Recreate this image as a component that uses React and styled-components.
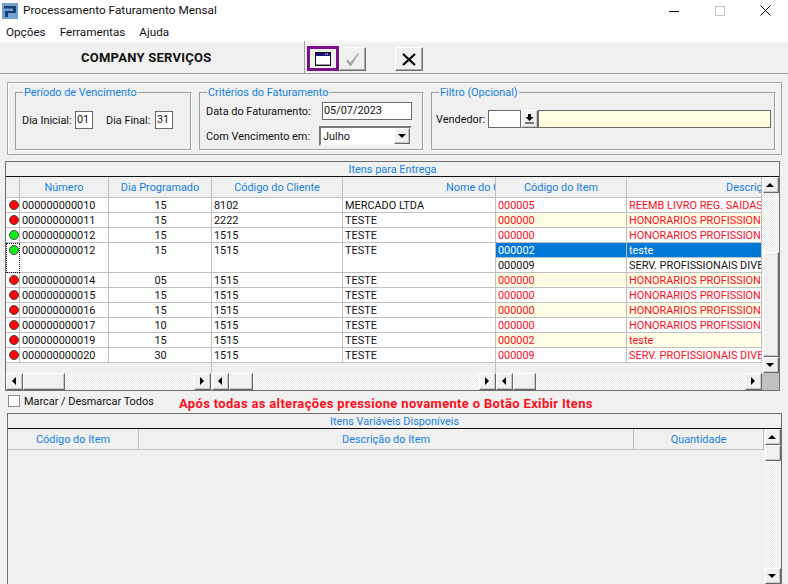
import styled, { createGlobalStyle } from "styled-components"

const FONT = `Roboto, "Noto Sans", "Liberation Sans", sans-serif`
const LINE = "#c0c0c0"
const BLUE = "#1580e6"
const RED = "#ff0d1d"

const Global = createGlobalStyle`
  html, body { margin: 0; padding: 0; background: #f0f0f0; }
  body { font-family: ${FONT}; font-size: 10.9px; color: #111; }
  * { box-sizing: border-box; }
`

const Page = styled.div`
  width: 788px;
  height: 584px;
  overflow: hidden;
  background: #f0f0f0;
`

const TitleBar = styled.div`
  height: 21px;
  background: #fff;
  display: flex;
  align-items: center;
  padding-left: 2px;
  font-size: 11.8px;
`

const TitleText = styled.span`
  margin: 0 0 1px 5px;
  flex: 1;
`

const WinButton = styled.div`
  width: 46px;
  height: 21px;
  display: flex;
  align-items: center;
  justify-content: center;
  &:last-child { width: 45px; }
`

const MenuBar = styled.div`
  height: 20px;
  background: #fff;
  display: flex;
  align-items: center;
  gap: 14px;
  padding: 2px 0 0 6px;
  font-size: 11.7px;
`

const Toolbar = styled.div`
  height: 33px;
  border-bottom: 1px solid #a0a0a0;
  display: flex;
  box-shadow: inset 0 2px 0 #f6f6f6;
`

const Company = styled.div`
  width: 305px;
  padding: 9px 0 0 81px;
  font-size: 13px;
  font-weight: 700;
  letter-spacing: 0.25px;
  border-right: 1px solid #a0a0a0;
  white-space: nowrap;
`

const ToolGroup = styled.div`
  display: flex;
  align-items: flex-start;
  padding: 5px 0 0 2px;
`

const ToolButton = styled.div`
  height: ${p => (p.$active ? 25 : 24)}px;
  width: ${p => p.$w}px;
  margin-left: ${p => p.$gap || 0}px;
  margin-top: ${p => (p.$active ? 0 : 1)}px;
  display: flex;
  align-items: center;
  justify-content: center;
  border: ${p => (p.$active ? "3px solid #7b0f8c" : "1px solid")};
  border-color: ${p => (p.$active ? "#7b0f8c" : "#fff #6e6e6e #6e6e6e #fff")};
  box-shadow: ${p => (p.$active ? "none" : "inset -1px -1px 0 #a8a8a8")};
  background: #f0f0f0;
`

const FilterPanel = styled.div`
  margin: 8px 6px 0 7px;
  height: 73px;
  border: 1px solid #a8a8a8;
  box-shadow: inset 1px 1px 0 #fff;
  display: flex;
  gap: 8px;
  padding: 1px 0 0 7px;
`

const Group = styled.fieldset`
  width: ${p => p.$w}px;
  height: 66px;
  margin: 0;
  padding: 0;
  border: 1px solid #a0a0a0;
  box-shadow: 1px 1px 0 #fff;
  display: block;
`

const Legend = styled.legend`
  margin-left: 7px;
  padding: 2px 1px 0;
  color: ${BLUE};
  line-height: 14px;
  white-space: nowrap;
`

const FieldRow = styled.div`
  display: flex;
  align-items: center;
  height: 20px;
  padding-left: ${p => p.$left}px;
  margin-top: ${p => p.$top || 0}px;
`

const Label = styled.span`
  width: ${p => p.$w}px;
  margin-left: ${p => p.$gap || 0}px;
  white-space: nowrap;
`

const Field = styled.input`
  width: ${p => p.$w}px;
  height: 18px;
  margin: 0;
  padding: 0 0 2px 1px;
  border: 1px solid #6a6a6a;
  background: ${p => p.$bg || "#fff"};
  font: inherit;
  color: #111;
  outline: none;
`

const Select = styled.div`
  width: 93px;
  height: 20px;
  border: 2px solid;
  border-color: #7a7a7a #f4f4f4 #f4f4f4 #7a7a7a;
  background: #fff;
  display: flex;
  justify-content: space-between;
  align-items: center;
  padding-left: 2px;
`

const ArrowButton = styled.div`
  width: ${p => p.$w || 16}px;
  height: ${p => p.$h || 16}px;
  flex: none;
  display: flex;
  align-items: center;
  justify-content: center;
  background: #f0f0f0;
  border: 1px solid;
  border-color: #fff #696969 #696969 #fff;
  box-shadow: inset -1px -1px 0 #c8c8c8;
`

const GridFrame = styled.div`
  margin: ${p => p.$top}px ${p => p.$right}px 0 ${p => p.$left}px;
  border: 1px solid #6e6e6e;
`

const GridTitle = styled.div`
  height: 15px;
  line-height: 15px;
  border-bottom: 1px solid #111;
  color: ${BLUE};
  text-align: center;
`

const GridMain = styled.div`
  display: flex;
  height: ${p => p.$h}px;
`

const Pane = styled.div`
  width: ${p => p.$w}px;
  flex: none;
  display: flex;
  flex-direction: column;
`

const Row = styled.div`
  display: grid;
  grid-template-columns: ${p => p.$cols};
  flex: none;
`

const HeadCell = styled.div`
  height: 21px;
  line-height: 21px;
  color: ${BLUE};
  border-right: 1px solid ${LINE};
  border-bottom: 1px solid ${LINE};
  overflow: hidden;
  white-space: nowrap;
  text-align: ${p => (p.$left ? "left" : "center")};
  padding-left: ${p => p.$left || 0}px;
`

const Cell = styled.div`
  height: ${p => p.$h || 15}px;
  line-height: 15px;
  padding: 0 1px 0 2px;
  overflow: hidden;
  white-space: nowrap;
  border-right: 1px solid ${LINE};
  border-bottom: 1px solid ${LINE};
  text-align: ${p => (p.$center ? "center" : "left")};
  background: ${p => p.$bg || "#fff"};
  color: ${p => p.$color || "#111"};
`

const StatusCell = styled(Cell)`
  padding: 2px 0 0 3px;
  border-right-color: ${p => (p.$focus ? "transparent" : LINE)};
  outline: ${p => (p.$focus ? "1px dotted #111" : "none")};
  outline-offset: -1px;
`

const Led = styled.div`
  width: 10px;
  height: 10px;
  border-radius: 50%;
  background: ${p => (p.$on ? "#0ff014" : "#ff0505")};
  border: 1px solid #4a4a4a;
`

const Filler = styled.div`
  border-right: ${p => (p.$line ? `1px solid ${LINE}` : "none")};
`

const Fillers = styled.div`
  flex: 1;
  display: grid;
  grid-template-columns: ${p => p.$cols};
`

const HBar = styled.div`
  display: flex;
  width: ${p => p.$w}px;
  height: 17px;
  flex: none;
  background: repeating-conic-gradient(#fdfdfd 0 25%, #e9e9e9 0 50%) 0 0 / 2px 2px;
`

const HBars = styled.div`
  display: flex;
  flex: none;
  gap: 1px;
`

const Thumb = styled(ArrowButton)`
  margin-right: auto;
`

const VBar = styled.div`
  flex: 1;
  display: flex;
  flex-direction: column;
  align-items: center;
  background: repeating-conic-gradient(#fdfdfd 0 25%, #e9e9e9 0 50%) 0 0 / 2px 2px;
  min-height: 0;
`

const VColumn = styled.div`
  flex: 1;
  display: flex;
  flex-direction: column;
  min-width: 0;
`

const VGap = styled.div`
  height: ${p => p.$h}px;
  flex: none;
`

const DownButton = styled(ArrowButton)`
  margin-top: auto;
`

const Corner = styled.div`
  height: 17px;
  flex: none;
  background: #c0c0c0;
`

const MarkRow = styled.div`
  height: 22px;
  display: flex;
  align-items: center;
  padding-left: 8px;
`

const Check = styled.div`
  width: 12px;
  height: 12px;
  background: #fff;
  border: 1px solid #8a8a8a;
  margin: 0 4px 2px 0;
`

const MarkLabel = styled.span`
  width: 155px;
  margin-bottom: 2px;
`

const Warning = styled.strong`
  color: ${RED};
  font-size: 13px;
  letter-spacing: 0.33px;
  white-space: nowrap;
  margin-top: 3px;
`

const Tri = ({ dir }) => {
  const pts = { up: "0,4 4,0 8,4", down: "0,0 8,0 4,4", left: "4,0 4,8 0,4", right: "0,0 0,8 4,4" }[dir]
  const horiz = dir === "left" || dir === "right"
  return (
    <svg width={horiz ? 5 : 9} height={horiz ? 9 : 5} viewBox={horiz ? "0 0 5 9" : "0 0 9 5"}>
      <polygon points={pts} fill="#000" />
    </svg>
  )
}

const AppIcon = () => (
  <svg width="16" height="16" viewBox="0 0 16 16">
    <rect width="16" height="16" fill="#6fa3d2" />
    <path d="M2 3h12v7H6v4H3v-6h8V5.500H2z" fill="#17406f" />
  </svg>
)

const LEFT_COLS = "14px 89px 103px 131px 153px"
const RIGHT_COLS = "131px 135px"
const CREAM = "#fffde3"
const HON = "HONORARIOS PROFISSIONAIS"
const SERV = "SERV. PROFISSIONAIS DIVERSOS"

const rows = [
  { num: "000000000010", day: "15", client: "8102", name: "MERCADO LTDA", items: [["000005", "REEMB LIVRO REG. SAIDAS"]] },
  { num: "000000000011", day: "15", client: "2222", name: "TESTE", cream: true, items: [["000000", HON]] },
  { num: "000000000012", day: "15", client: "1515", name: "TESTE", on: true, items: [["000000", HON]] },
  { num: "000000000012", day: "15", client: "1515", name: "TESTE", on: true, focus: true, items: [["000002", "teste", "sel"], ["000009", SERV, "plain"]] },
  { num: "000000000014", day: "05", client: "1515", name: "TESTE", cream: true, items: [["000000", HON]] },
  { num: "000000000015", day: "15", client: "1515", name: "TESTE", items: [["000000", HON]] },
  { num: "000000000016", day: "15", client: "1515", name: "TESTE", cream: true, items: [["000000", HON]] },
  { num: "000000000017", day: "10", client: "1515", name: "TESTE", items: [["000000", HON]] },
  { num: "000000000019", day: "15", client: "1515", name: "TESTE", cream: true, items: [["000002", "teste"]] },
  { num: "000000000020", day: "30", client: "1515", name: "TESTE", items: [["000009", SERV]] },
]

const itemStyle = (kind, cream) => {
  if (kind === "sel") return { $bg: "#0078d7", $color: "#fff" }
  if (kind === "plain") return { $color: "#111" }
  return { $bg: cream ? CREAM : "#fff", $color: RED }
}

export default function App() {
  return (
    <Page>
      <Global />
      <TitleBar>
        <AppIcon />
        <TitleText>Processamento Faturamento Mensal</TitleText>
        <WinButton>
          <svg width="10" height="10"><path d="M0 5.500h10" stroke="#000" /></svg>
        </WinButton>
        <WinButton>
          <svg width="10" height="10"><rect x=".5" y=".5" width="9" height="9" fill="none" stroke="#c4c4c4" /></svg>
        </WinButton>
        <WinButton>
          <svg width="11" height="11"><path d="M.5.5l10 10M10.500.5l-10 10" stroke="#000" /></svg>
        </WinButton>
      </TitleBar>
      <MenuBar>
        <span>Opções</span>
        <span>Ferramentas</span>
        <span>Ajuda</span>
      </MenuBar>
      <Toolbar>
        <Company>COMPANY SERVIÇOS</Company>
        <ToolGroup>
          <ToolButton $active $w={32}>
            <svg width="16" height="14" viewBox="0 0 16 14">
              <rect x=".5" y=".5" width="15" height="13" fill="#fff" stroke="#111" />
              <rect x="1" y="1" width="14" height="3" fill="#16167e" />
              <path d="M10 2h4" stroke="#fff" strokeDasharray="1 1" />
              <path d="M1 12.500h14" stroke="#9a9a9a" />
            </svg>
          </ToolButton>
          <ToolButton $w={27}>
            <svg width="15" height="15" viewBox="0 0 15 15">
              <path d="M1 9l2-1.500 2.500 3L13 1l1 .6L6 14h-1z" fill="#a6a6a6" />
            </svg>
          </ToolButton>
          <ToolButton $w={28} $gap={29}>
            <svg width="14" height="13" viewBox="0 0 14 13">
              <path d="M1 1l12 11M13 1L1 12" stroke="#000" strokeWidth="2.2" />
            </svg>
          </ToolButton>
        </ToolGroup>
      </Toolbar>

      <FilterPanel>
        <Group $w={176}>
          <Legend>Período de Vencimento</Legend>
          <FieldRow $left={6} $top={10}>
            <Label $w={53}>Dia Inicial:</Label>
            <Field $w={18} defaultValue="01" />
            <Label $w={49} $gap={13}>Dia Final:</Label>
            <Field $w={18} defaultValue="31" />
          </FieldRow>
        </Group>
        <Group $w={224}>
          <Legend>Critérios do Faturamento</Legend>
          <FieldRow $left={6} $top={1}>
            <Label $w={116}>Data do Faturamento:</Label>
            <Field $w={90} defaultValue="05/07/2023" />
          </FieldRow>
          <FieldRow $left={6} $top={5}>
            <Label $w={113}>Com Vencimento em:</Label>
            <Select>
              Julho
              <ArrowButton>
                <Tri dir="down" />
              </ArrowButton>
            </Select>
          </FieldRow>
        </Group>
        <Group $w={344}>
          <Legend>Filtro (Opcional)</Legend>
          <FieldRow $left={4} $top={9}>
            <Label $w={52}>Vendedor:</Label>
            <Field $w={33} />
            <ArrowButton $w={17} $h={18}>
              <svg width="9" height="10" viewBox="0 0 9 10">
                <path d="M3 0h3v3h2.500L4.500 7 .5 3H3zM0 8.500h9v1H0z" fill="#000" />
              </svg>
            </ArrowButton>
            <Field $w={233} $bg="#ffffe2" />
          </FieldRow>
        </Group>
      </FilterPanel>

      <GridFrame $top={6} $right={8} $left={5}>
        <GridTitle>Itens para Entrega</GridTitle>
        <GridMain $h={213}>
          <Pane $w={490}>
            <Row $cols={LEFT_COLS}>
              <HeadCell />
              <HeadCell>Número</HeadCell>
              <HeadCell>Dia Programado</HeadCell>
              <HeadCell>Código do Cliente</HeadCell>
              <HeadCell $left={103}>Nome do Cliente</HeadCell>
            </Row>
            {rows.map((r, i) => {
              const h = r.items.length * 15
              return (
                <Row key={i} $cols={LEFT_COLS}>
                  <StatusCell $h={h} $focus={r.focus}>
                    <Led $on={r.on} />
                  </StatusCell>
                  <Cell $h={h}>{r.num}</Cell>
                  <Cell $h={h} $center>{r.day}</Cell>
                  <Cell $h={h}>{r.client}</Cell>
                  <Cell $h={h}>{r.name}</Cell>
                </Row>
              )
            })}
            <Fillers $cols="206px 284px">
              <Filler $line />
              <Filler $line />
            </Fillers>
            <HBars>
              <HBar $w={205}>
                <ArrowButton $w={17} $h={17}><Tri dir="left" /></ArrowButton>
                <Thumb $w={42} $h={17} />
                <ArrowButton $w={17} $h={17}><Tri dir="right" /></ArrowButton>
              </HBar>
              <HBar $w={284}>
                <ArrowButton $w={17} $h={17}><Tri dir="left" /></ArrowButton>
                <Thumb $w={24} $h={17} />
                <ArrowButton $w={17} $h={17}><Tri dir="right" /></ArrowButton>
              </HBar>
            </HBars>
          </Pane>
          <Pane $w={266}>
            <Row $cols={RIGHT_COLS}>
              <HeadCell>Código do Item</HeadCell>
              <HeadCell $left={99}>Descrição do Item</HeadCell>
            </Row>
            {rows.flatMap((r, i) =>
              r.items.map(([code, desc, kind], j) => (
                <Row key={`${i}-${j}`} $cols={RIGHT_COLS}>
                  <Cell {...itemStyle(kind, r.cream)}>{code}</Cell>
                  <Cell {...itemStyle(kind, r.cream)}>{desc}</Cell>
                </Row>
              ))
            )}
            <Fillers $cols={RIGHT_COLS}>
              <Filler />
              <Filler />
            </Fillers>
            <HBar $w={266}>
              <ArrowButton $w={17} $h={17}><Tri dir="left" /></ArrowButton>
              <Thumb $w={23} $h={17} />
              <ArrowButton $w={17} $h={17}><Tri dir="right" /></ArrowButton>
            </HBar>
          </Pane>
          <VColumn>
            <VBar>
              <ArrowButton><Tri dir="up" /></ArrowButton>
              <VGap $h={59} />
              <ArrowButton $h={105} />
              <ArrowButton><Tri dir="down" /></ArrowButton>
            </VBar>
            <Corner />
          </VColumn>
        </GridMain>
      </GridFrame>

      <MarkRow>
        <Check />
        <MarkLabel>Marcar / Desmarcar Todos</MarkLabel>
        <Warning>Após todas as alterações pressione novamente o Botão Exibir Itens</Warning>
      </MarkRow>

      <GridFrame $top={0} $right={6} $left={7}>
        <GridTitle>Itens Variáveis Disponíveis</GridTitle>
        <GridMain $h={155}>
          <Pane $w={756}>
            <Row $cols="131px 495px 130px">
              <HeadCell>Código do Item</HeadCell>
              <HeadCell>Descrição do Item</HeadCell>
              <HeadCell>Quantidade</HeadCell>
            </Row>
          </Pane>
          <VColumn>
            <VBar>
              <ArrowButton><Tri dir="up" /></ArrowButton>
              <ArrowButton />
              <DownButton><Tri dir="down" /></DownButton>
            </VBar>
          </VColumn>
        </GridMain>
      </GridFrame>
    </Page>
  )
}
